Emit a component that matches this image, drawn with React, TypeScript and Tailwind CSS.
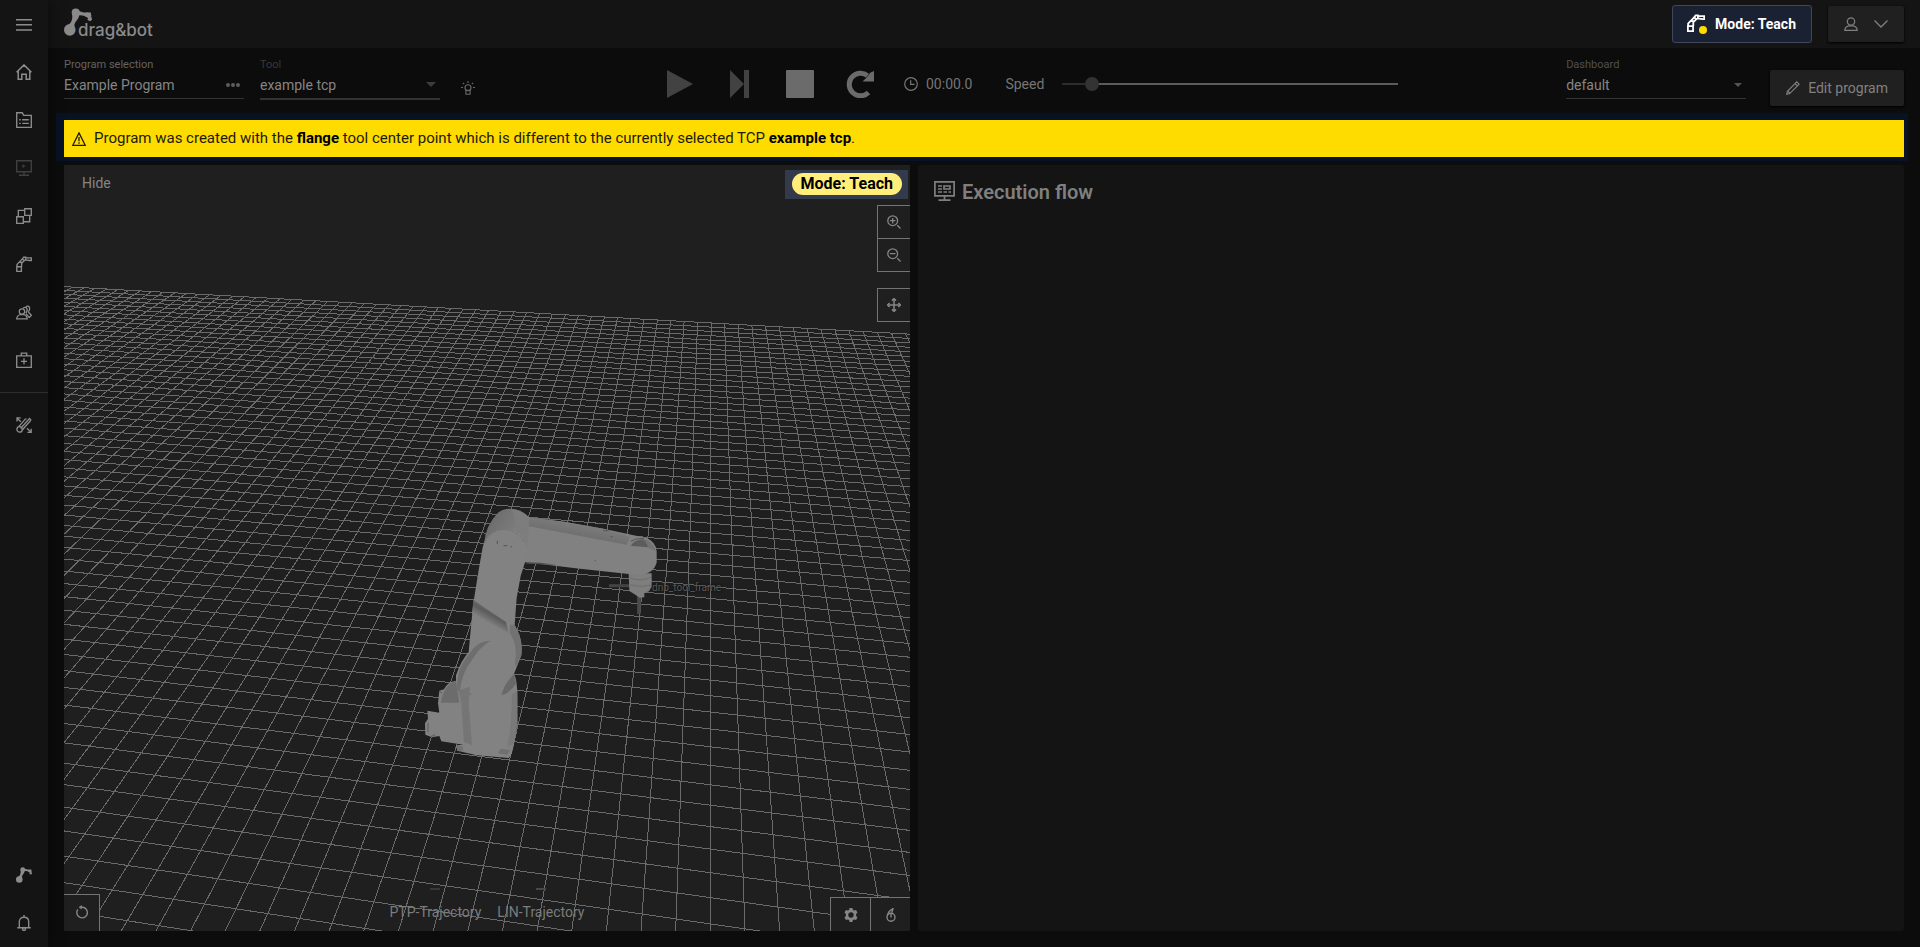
import type { ReactNode } from "react";

/* ---------- icons ---------- */

type IconProps = { size?: number; box?: number; className?: string; stroke?: number; children: ReactNode };

function Icon({ size = 16, box = 16, className = "", stroke = 1.35, children }: IconProps) {
  return (
    <svg
      width={size}
      height={size}
      viewBox={`0 0 ${box} ${box}`}
      fill="none"
      stroke="currentColor"
      strokeWidth={stroke}
      className={`shrink-0 ${className}`}
      aria-hidden="true"
    >
      {children}
    </svg>
  );
}

const HomeIcon = () => (
  <Icon stroke={1.5}>
    <path d="M.6 8.2 8 .9l7.400 7.300M2.200 7v8.300h3.600v-5h4.400v5h3.600V7" />
  </Icon>
);
const ProgramsIcon = () => (
  <Icon>
    <path d="M.7 15.300V.7h5.600l1.400 2.600h7.600v12z" />
    <path d="M3.200 7.700h1.600M6.200 7.700h6.600M3.200 11.300h1.600M6.200 11.300h6.600" />
  </Icon>
);
const MonitorIcon = () => (
  <Icon>
    <path d="M.7.7h14.600v11H.7zM8 11.700v3M3 15.200h10" />
    <path d="m6.500 4.300 3 1.800-3 1.800z" fill="currentColor" stroke="none" />
  </Icon>
);
const BlocksIcon = () => (
  <Icon>
    <path d="M8.700.7h6.600v6.600H8.700zM.7 8.700h6.600v6.600H.7zM8.700 2.300H2.300v6.400M7.300 13.700h6.400V7.300" />
  </Icon>
);
const ArmPaths = () => (
  <>
    <path d="M.8 15.300V10.700h4.600v4.600zM1 10.700V8.500L3 6.300h2.600v4.400M3.200 6.300l3.200-3.400 1.800 1.800-2.700 2.700M6.300 3 7.700 1.200h2v2.600L8.200 4.700M9.700 1.800h5.600v2.700h-1.500L9.700 3.800" />
  </>
);
const RobotIcon = () => (
  <Icon>
    <ArmPaths />
  </Icon>
);
const UsersIcon = () => (
  <Icon stroke={1.3}>
    <path d="M.7 14.800c.2-2.300 1.600-3.700 3.700-4.300h3.400c2 .6 3.300 2 3.500 4.300z" />
    <circle cx="6" cy="7.600" r="2.700" />
    <path d="M7 4.600C7.600 3 10.500 3 11 5c.4 1.600-.3 3.200-1.300 4M10 3c1-1.400 3.300-1 3.600.9.200 1.600-.4 2.900-1.300 3.800M10 9.800l3.300 3.800M12.300 8l3 3.200-2 2.400" />
  </Icon>
);
const KitIcon = () => (
  <Icon>
    <path d="M.7 3.800h14.600v11.500H.7zM5.300 3.800V1.100h5.400v2.700M8 6.300v6M5 9.300h6" />
  </Icon>
);
const ToolsIcon = () => (
  <Icon stroke={1.3}>
    <circle cx="3.600" cy="12.400" r="2.700" />
    <path d="M2.600 9.800 9.500 1.800M6.300 13 14.800 3.300M9.500 1.800h1M4.600 11.500 13.500 1.500l1.700 1.600" />
    <path d="M1 4.500V.8h3.700M1.200 1.200l3.600 3.600M15.200 11.800v3.600h-3.700M14.800 15 11 11.200" />
  </Icon>
);
const LinkMark = () => (
  <>
    <circle cx="3.300" cy="12.500" r="3.300" />
    <circle cx="6.700" cy="2.600" r="2.300" />
    <path d="M4.500 2.500h4.700c-.5 2.200-1 3.600-2.400 5.200-1 1.300-1 2.400-.6 3.800L2 10c2.400-1.500 3.200-4 2.500-7.500z" />
    <path d="M7 .6c2 1.500 4 2.300 6 1.800L15.300 2.600l.4 2.200-2 .9C11 3.900 9.500 3.900 7.500 4.300z" />
    <path d="m14 5 1.800.3.200 1.400-1 .8-1.600-.6z" />
  </>
);
const RobotLinkIcon = () => (
  <svg width="16" height="16" viewBox="0 0 16 16" fill="currentColor" aria-hidden="true">
    <LinkMark />
  </svg>
);
const BellIcon = () => (
  <Icon>
    <path d="M3.300 12.500V7c0-3 2-4.800 4.700-4.800S12.700 4 12.700 7v5.500M1.300 12.700h13.400M8 0v2.200" />
    <circle cx="8" cy="14" r="1.500" />
  </Icon>
);
const BulbIcon = () => (
  <Icon size={14} box={14} stroke={1.1}>
    <circle cx="7" cy="6.700" r="3" />
    <path d="M4.900 9.300h4.200v4H4.900zM7 0v2M0 6.500h2M12 6.500h2M1.800 1.800l1.400 1.400M12.200 1.800l-1.400 1.400" />
  </Icon>
);
const ClockIcon = () => (
  <Icon size={14} box={14} stroke={1.2}>
    <circle cx="7" cy="7" r="6.300" />
    <path d="M6.700 3.300v4h3.800" />
  </Icon>
);
const PencilIcon = () => (
  <Icon size={14} box={14} stroke={1.1}>
    <path d="m.7 13.300.7-3L10.800.9l2.300 2.300-9.400 9.400zM9 2.600l2.300 2.300M1.700 10l2.300 2.300" />
  </Icon>
);
const WarningIcon = () => (
  <Icon size={14} box={14} stroke={1.3}>
    <path d="M7 .9 13.200 13.300H.8zM7 5v4.300M7 10.300v1.500" />
  </Icon>
);
const UserIcon = () => (
  <Icon size={14} box={14} stroke={1.2}>
    <path d="M.8 13.400c.1-2.700 1.500-4 4-4.500h4.400c2.500.5 3.900 1.800 4 4.500z" />
    <circle cx="7" cy="4.500" r="3.700" />
  </Icon>
);
const FlowIcon = () => (
  <Icon size={21} box={21} stroke={1.7}>
    <path d="M.9.9h19.200v14H.9zM10.500 15v4M4.500 19.200h12" />
    <path d="M4 5h4M4 8h4M4 11h4M10 5h6v3h-6zM9.500 11H13M14.500 11H17" />
  </Icon>
);
const ZoomIcon = ({ plus = false }: { plus?: boolean }) => (
  <Icon size={14} box={14} stroke={1.3}>
    <circle cx="5.700" cy="5.700" r="4.900" />
    <path d="M3 5.700h5.400M10.300 10.300 13.500 13.500" />
    {plus && <path d="M5.700 3v5.400" />}
  </Icon>
);
const MoveIcon = () => (
  <Icon size={14} box={14} stroke={1.5}>
    <path d="M7 1v12M1 7h12" />
    <path d="M5 2.600 7 .6l2 2M5 11.400l2 2 2-2M2.600 5l-2 2 2 2M11.400 5l2 2-2 2" />
  </Icon>
);
const ResetIcon = () => (
  <Icon size={14} box={14} stroke={1.4}>
    <path d="M5.500 2.300h2a5.300 5.300 0 1 1-5.700 5.300c0-1.300.4-2.300 1-3.100" />
    <path d="M6.800 0v4.600L3.600 2.300z" fill="currentColor" stroke="none" />
  </Icon>
);
const GearIcon = () => (
  <svg width="14" height="14" viewBox="0 0 14 14" fill="currentColor" fillRule="evenodd" aria-hidden="true">
    <path d="M5.600 0h2.800l.5 1.900 1.200.7L12 2l1.500 2.500L12.100 6v2l1.400 1.500L12 12l-1.900-.6-1.200.7L8.400 14H5.600l-.5-1.900-1.200-.7L2 12 .5 9.500 1.900 8V6L.5 4.500 2 2l1.900.6 1.200-.7zM7 4.300a2.700 2.700 0 1 0 0 5.400 2.700 2.700 0 0 0 0-5.400z" />
  </svg>
);
const TorchIcon = () => (
  <Icon size={14} box={14} stroke={1.4}>
    <circle cx="7" cy="9.200" r="4" />
    <path d="M3.300 7.700C4 4.600 6 2.200 9 .7L7.700 4.800M7 6v3.600" />
  </Icon>
);

/* ---------- 3D scene ---------- */

const ROWS = Array.from({ length: 62 }, (_, i) => i - 42);
const COLS = Array.from({ length: 110 }, (_, i) => i - 70);
const VANISH = { x: -6150, y: -62.5 };

const rowSlope = (n: number) => {
  const y = 36065 / (51.56 - n) - 62.5;
  return { y, m: (y - VANISH.y) / (711 - VANISH.x) };
};
const rowY = (n: number, x: number) => {
  const { y, m } = rowSlope(n);
  return y + m * (x - 711);
};
const colX = (u: number, y: number) => 711.5 - (y + 66) * 0.0012 + u * 0.03476 * (y + 66);

function FloorGrid() {
  return (
    <g stroke="#6a6a6a" strokeWidth="1" shapeRendering="crispEdges">
      {ROWS.map((n) => (
        <line key={`r${n}`} x1={0} y1={rowY(n, 0)} x2={1400} y2={rowY(n, 1400)} />
      ))}
      {COLS.map((u) => {
        let top = 320;
        for (let i = 0; i < 4; i++) top = rowY(-42, colX(u, top));
        return <line key={`c${u}`} x1={colX(u, top)} y1={top} x2={colX(u, 1100)} y2={1100} />;
      })}
    </g>
  );
}

function RobotModel() {
  return (
    <g transform="translate(400 490) scale(0.33333)">
      <defs>
        <linearGradient id="band" x1="285" y1="362" x2="264" y2="398" gradientUnits="userSpaceOnUse">
          <stop offset="0" stopColor="#6c6c6c" />
          <stop offset="0.400" stopColor="#5c5c5c" />
          <stop offset="1" stopColor="#818181" />
        </linearGradient>
        <linearGradient id="upper" x1="540" y1="100" x2="530" y2="155" gradientUnits="userSpaceOnUse">
          <stop offset="0" stopColor="#7c7c7c" />
          <stop offset="0.700" stopColor="#6f6f6f" />
          <stop offset="1" stopColor="#818181" />
        </linearGradient>
        <linearGradient id="joint" x1="262" y1="80" x2="340" y2="130" gradientUnits="userSpaceOnUse">
          <stop offset="0" stopColor="#6a6a6a" />
          <stop offset="1" stopColor="#7d7d7d" />
        </linearGradient>
      </defs>
      {/* tool axes */}
      <path d="M627 287h62" stroke="#434343" strokeWidth="9" />
      <path d="M717 315v57" stroke="#4b4b4b" strokeWidth="11" />
      {/* gripper mount */}
      <path d="M686 250h69v40l-8 14-14 5v13l-14 1-12-8-19-12z" fill="#7e7e7e" />
      <path d="M690 264q32 12 62-2M690 284q30 10 60 2" stroke="#6d6d6d" strokeWidth="3" fill="none" />
      {/* forearm */}
      <path
        d="M340 58Q366 62 386 82L496 96 610 116 740 144Q768 156 770 184V218Q762 244 736 252 708 256 686 252L540 236 376 217 340 200z"
        fill="#818181"
      />
      <path d="M384 82 496 96 610 116 690 140 680 164 560 142 384 108z" fill="url(#upper)" />
      <path d="M692 168Q702 150 728 148 752 152 762 176 744 170 728 170 710 168 692 168z" fill="#5c5c5c" />
      <path d="M730 150Q760 156 768 184 752 178 744 172 742 160 730 150z" fill="#747474" />
      <path d="M692 154q16-10 40-9" stroke="#565656" strokeWidth="3" fill="none" />
      {/* elbow joint */}
      <path d="M252 162Q256 106 294 68 314 52 346 58 372 64 388 84L382 170 252 172z" fill="url(#joint)" />
      <path d="M336 60Q366 62 388 84L382 120 352 112z" fill="#7d7d7d" />
      {/* upper arm and base */}
      <path
        d="M248 172Q256 134 292 120 332 112 358 130 386 154 380 202L362 258 350 324 344 404 358 434Q368 464 364 496L342 552Q352 570 352 620V700L342 762Q336 798 326 804L230 796 172 782 168 766 190 764 124 754 118 738 96 742 76 734 75 700 84 686 82 662 118 668 114 640 118 602 132 598Q142 576 168 572V556Q184 510 206 486L212 420 220 340 236 240z"
        fill="#828282"
      />
      <path d="M220 330 318 396 326 430 216 372z" fill="url(#band)" />
      <path d="M330 404 344 404 358 434Q368 464 364 496L350 530 344 520Q356 470 330 430z" fill="#727272" />
      <path d="M304 616Q312 582 342 552L348 580Q330 610 304 616z" fill="#696969" />
      <path d="M172 600Q166 540 210 488 234 452 272 452 240 470 216 510 184 550 180 604z" fill="#6e6e6e" />
      <path d="M176 602 184 640 192 756 216 766 206 640 210 590z" fill="#757575" />
      <path d="M122 638Q134 580 168 574L178 638z" fill="#6c6c6c" />
      <path d="M336 612 352 604V700L342 762 322 770Q336 700 336 612z" fill="#797979" />
      <path d="M170 764l18 6 2 14-18-2zM302 776l28 4-8 14-28-4z" fill="#707070" />
      <path d="M84 698v28M92 740l14-6M118 604l8 6" stroke="#666" strokeWidth="4" fill="none" />
      <path d="M254 160q12-34 52-42 44 0 68 40" stroke="#727272" strokeWidth="3" strokeDasharray="10 4" fill="none" />
      <path d="M292 152v10M310 167h12M334 168v4M210 612h3M586 210v3M610 122h16M632 140h6" stroke="#555" strokeWidth="3" />
      <path d="M380 217 420 218 470 225 378 221z" fill="#4d4d4d" />
    </g>
  );
}

function Scene() {
  return (
    <svg
      className="absolute inset-0 h-full w-full"
      viewBox="64 165 846 766"
      preserveAspectRatio="xMidYMid slice"
      role="img"
      aria-label="Robot scene"
    >
      <FloorGrid />
      <RobotModel />
      <text
        x="652"
        y="591"
        fontFamily="Roboto, sans-serif"
        fontSize="10"
        fill="#5a5a5a"
        className="[text-shadow:0_0_3px_#000]"
      >
        dnb_tool_frame
      </text>
    </svg>
  );
}

/* ---------- shell ---------- */

const NAV = [
  { label: "Home", icon: <HomeIcon /> },
  { label: "Programs", icon: <ProgramsIcon /> },
  { label: "Execution", icon: <MonitorIcon />, dim: true },
  { label: "Function blocks", icon: <BlocksIcon /> },
  { label: "Robot", icon: <RobotIcon /> },
  { label: "Users", icon: <UsersIcon /> },
  { label: "Diagnostics", icon: <KitIcon /> },
];

function NavButton({ label, dim = false, children }: { label: string; dim?: boolean; children: ReactNode }) {
  return (
    <button
      type="button"
      aria-label={label}
      className={`flex h-12 w-12 shrink-0 items-center justify-center ${dim ? "text-[#404040]" : "text-[#8c8c8c]"}`}
    >
      {children}
    </button>
  );
}

function Sidebar() {
  return (
    <nav className="z-10 flex w-12 shrink-0 flex-col bg-[#141414] shadow-[0_0_16px_rgba(0,0,0,0.5)]">
      <NavButton label="Menu">
        <Icon>
          <path d="M0 3.700h16M0 8.700h16M0 14h16" />
        </Icon>
      </NavButton>
      {NAV.map((n) => (
        <NavButton key={n.label} label={n.label} dim={n.dim}>
          {n.icon}
        </NavButton>
      ))}
      <hr className="my-2 border-t border-[#2e2e2e]" />
      <NavButton label="Tools">
        <ToolsIcon />
      </NavButton>
      <div className="mt-auto flex flex-col">
        <NavButton label="Robot connection">
          <RobotLinkIcon />
        </NavButton>
        <NavButton label="Notifications">
          <BellIcon />
        </NavButton>
      </div>
    </nav>
  );
}

function Header() {
  return (
    <header className="flex h-12 shrink-0 items-center justify-between bg-[#141414] px-4">
      <a href="#home" aria-label="drag&bot" className="relative block h-8 w-24 text-[#8a8a8a]">
        <svg width="28" height="28" viewBox="0 0 16 16" fill="currentColor" aria-hidden="true">
          <LinkMark />
        </svg>
        <span className="absolute top-3 left-[14px] font-[Inter,sans-serif] text-[17px] leading-5 font-medium">
          drag&amp;bot
        </span>
      </a>
      <div className="flex items-center gap-4">
        <button
          type="button"
          className="flex h-[38px] items-center gap-2 rounded-[3px] border border-[#3f485a] bg-[#1a2133] pr-[15px] pl-[14px] text-sm font-bold text-white"
        >
          <span className="relative block h-5 w-5">
            <Icon size={18} className="text-white" stroke={1.6}>
              <ArmPaths />
            </Icon>
            <span className="absolute right-0 bottom-0 h-2 w-2 rounded-full bg-[#ffdc00]" />
          </span>
          Mode: Teach
        </button>
        <button
          type="button"
          aria-label="User menu"
          className="flex h-9 items-center gap-4 rounded-[2px] bg-[#202020] px-4 text-[#808080] shadow-sm shadow-black"
        >
          <UserIcon />
          <Icon size={14} box={14} stroke={1.3}>
            <path d="m.5 3.500 6.500 6.500 6.500-6.500" />
          </Icon>
        </button>
      </div>
    </header>
  );
}

const FIELD = "h-5 w-full appearance-none bg-transparent text-sm leading-5 text-[#858585] outline-none";

function Toolbar() {
  return (
    <div className="flex h-[65px] shrink-0 px-4 pt-2">
      <div className="w-[180px] pt-px">
        <label htmlFor="program" className="block h-4 text-[11px] leading-4 text-[#636363]">
          Program selection
        </label>
        <div className="flex h-[26px] items-center border-b border-[#333] pb-[2px]">
          <input id="program" defaultValue="Example Program" className={FIELD} />
          <button type="button" aria-label="Browse programs" className="mr-1 text-[#5e5e5e]">
            <svg width="14" height="4" viewBox="0 0 14 4" fill="currentColor" className="block" aria-hidden="true">
              <circle cx="2" cy="2" r="2" />
              <circle cx="7" cy="2" r="2" />
              <circle cx="12" cy="2" r="2" />
            </svg>
          </button>
        </div>
      </div>
      <div className="ml-4 w-[180px] pt-px">
        <label htmlFor="tool" className="block h-4 text-[11px] leading-4 text-[#383838]">
          Tool
        </label>
        <div className="flex h-[27px] items-center border-b-2 border-[#333] pb-[2px]">
          <select id="tool" className={FIELD}>
            <option>example tcp</option>
          </select>
          <svg width="10" height="5" viewBox="0 0 10 5" fill="#3c3c3c" className="mr-1 shrink-0" aria-hidden="true">
            <path d="M0 0h10L5 5z" />
          </svg>
        </div>
      </div>
      <button type="button" aria-label="Tool light" className="mt-6 ml-[21px] flex h-4 items-center text-[#6a6a6a]">
        <BulbIcon />
      </button>

      <div className="mr-42 ml-48 flex h-14 flex-1 items-center">
        <div className="flex shrink-0 items-center gap-8 text-[#6b6b6b]">
          <button type="button" aria-label="Play" className="text-[#424242]">
            <svg width="28" height="28" viewBox="0 0 28 28" fill="currentColor" aria-hidden="true">
              <path d="M0 0 26 14 0 28z" />
            </svg>
          </button>
          <button type="button" aria-label="Step" className="text-[#424242]">
            <svg width="27" height="28" viewBox="0 0 27 28" fill="currentColor" aria-hidden="true">
              <path d="M3 0l14 14L3 28zM17 0h5v28h-5z" />
            </svg>
          </button>
          <button type="button" aria-label="Stop">
            <svg width="28" height="28" viewBox="0 0 28 28" fill="currentColor" aria-hidden="true">
              <rect width="28" height="28" rx="1" />
            </svg>
          </button>
          <button type="button" aria-label="Restart">
            <svg width="28" height="28" viewBox="0 0 28 28" fill="none" aria-hidden="true">
              <path d="M22.500 22.500A11.300 11.300 0 1 1 21.500 5.600" stroke="currentColor" strokeWidth="5" />
              <path d="M28 1v10.500H16.500L21 7l3.500-4.500z" fill="currentColor" />
            </svg>
          </button>
        </div>
        <div className="ml-[30px] flex shrink-0 items-center gap-2 text-sm text-[#757575]">
          <ClockIcon />
          <span>00:00.0</span>
        </div>
        <label htmlFor="speed" className="ml-[33px] shrink-0 text-sm text-[#757575]">
          Speed
        </label>
        <input
          id="speed"
          type="range"
          min={0}
          max={100}
          defaultValue={7}
          className="ml-[18px] h-[2px] min-w-0 flex-1 appearance-none bg-[linear-gradient(to_right,#2c2c2c_9%,#5c5c5c_9%)] [&::-webkit-slider-thumb]:h-[14px] [&::-webkit-slider-thumb]:w-[14px] [&::-webkit-slider-thumb]:appearance-none [&::-webkit-slider-thumb]:rounded-full [&::-webkit-slider-thumb]:bg-[#333]"
        />
      </div>

      <div className="w-[180px] pt-px">
        <label htmlFor="dashboard" className="block h-4 text-[11px] leading-4 text-[#505050]">
          Dashboard
        </label>
        <div className="flex h-[26px] items-center border-b border-[#333] pb-[2px]">
          <select id="dashboard" className={FIELD}>
            <option>default</option>
          </select>
          <svg width="8" height="4" viewBox="0 0 8 4" fill="#555" className="mr-1 shrink-0" aria-hidden="true">
            <path d="M0 0h8L4 4z" />
          </svg>
        </div>
      </div>
      <button
        type="button"
        className="mt-[14px] ml-6 flex h-9 shrink-0 items-center gap-2 rounded-[2px] bg-[#202020] px-4 text-sm text-[#808080] shadow-sm shadow-black"
      >
        <PencilIcon />
        Edit program
      </button>
    </div>
  );
}

function Banner() {
  return (
    <div className="mr-3 ml-2 shrink-0 bg-[#071225] pt-[7px] pr-1 pb-1 pl-2">
      <div role="alert" className="flex h-[37px] items-center gap-2 bg-[#ffdc00] px-2 text-[15px] text-[#1c1a08]">
        <WarningIcon />
        <p>
          Program was created with the <strong className="text-black">flange</strong> tool center point which is
          different to the currently selected TCP <strong className="text-black">example tcp</strong>.
        </p>
      </div>
    </div>
  );
}

const EDGE = "flex items-center justify-center border-[#747474] bg-[#1f1f1f] text-[#868686]";

function Viewport() {
  return (
    <section className="relative flex flex-col overflow-hidden bg-[#1f1f1f]">
      <Scene />
      <div className="relative flex items-start justify-between pt-[5px] pr-[2px]">
        <button type="button" className="mt-[3px] ml-[18px] text-sm leading-5 text-[#858585]">
          Hide
        </button>
        <div className="bg-[#333a4b] pt-[3px] pr-[6px] pb-1 pl-[7px]">
          <span className="block rounded-full bg-[#ffee7a] px-[9px] text-base leading-[22px] font-bold text-black">
            Mode: Teach
          </span>
        </div>
      </div>
      <div className="relative mt-[6px] flex flex-col items-end">
        <button type="button" aria-label="Zoom in" className={`${EDGE} h-[33px] w-[33px] border-t border-l`}>
          <ZoomIcon plus />
        </button>
        <button type="button" aria-label="Zoom out" className={`${EDGE} h-[34px] w-[33px] border-y border-l`}>
          <ZoomIcon />
        </button>
        <button type="button" aria-label="Move" className={`${EDGE} mt-4 h-[34px] w-[33px] border-y border-l`}>
          <MoveIcon />
        </button>
      </div>
      <div className="relative mt-auto grid grid-cols-[1fr_auto_1fr] items-end">
        <button type="button" aria-label="Reset view" className={`${EDGE} h-[37px] w-9 border-t border-r pb-[2px]`}>
          <ResetIcon />
        </button>
        <div className="flex gap-4 pb-[9px] text-sm leading-5 text-[#7c7c7c]">
          <div className="flex flex-col items-center gap-3">
            <span className="h-[2px] w-[10px] bg-[#383838]" />
            <span>PTP-Trajectory</span>
          </div>
          <div className="flex flex-col items-center gap-3">
            <span className="h-[2px] w-[10px] bg-[#484848]" />
            <span>LIN-Trajectory</span>
          </div>
        </div>
        <div className="flex justify-end">
          <button type="button" aria-label="Settings" className={`${EDGE} h-[34px] w-10 border-t border-l`}>
            <GearIcon />
          </button>
          <button type="button" aria-label="Teach tools" className={`${EDGE} h-[34px] w-10 border-t border-l`}>
            <TorchIcon />
          </button>
        </div>
      </div>
    </section>
  );
}

export default function App() {
  return (
    <div className="flex h-screen bg-[#0c0c0c] font-[Roboto,sans-serif]">
      <Sidebar />
      <div className="flex min-w-0 flex-1 flex-col">
        <Header />
        <Toolbar />
        <Banner />
        <main className="mx-4 mt-1 mb-4 grid min-h-0 flex-1 grid-cols-[846fr_986fr] gap-2">
          <Viewport />
          <section className="rounded-[3px] bg-[#141414] p-4">
            <h2 className="flex items-center gap-[7px] text-xl leading-5 font-semibold text-[#7f7f7f]">
              <FlowIcon />
              Execution flow
            </h2>
          </section>
        </main>
      </div>
    </div>
  );
}
